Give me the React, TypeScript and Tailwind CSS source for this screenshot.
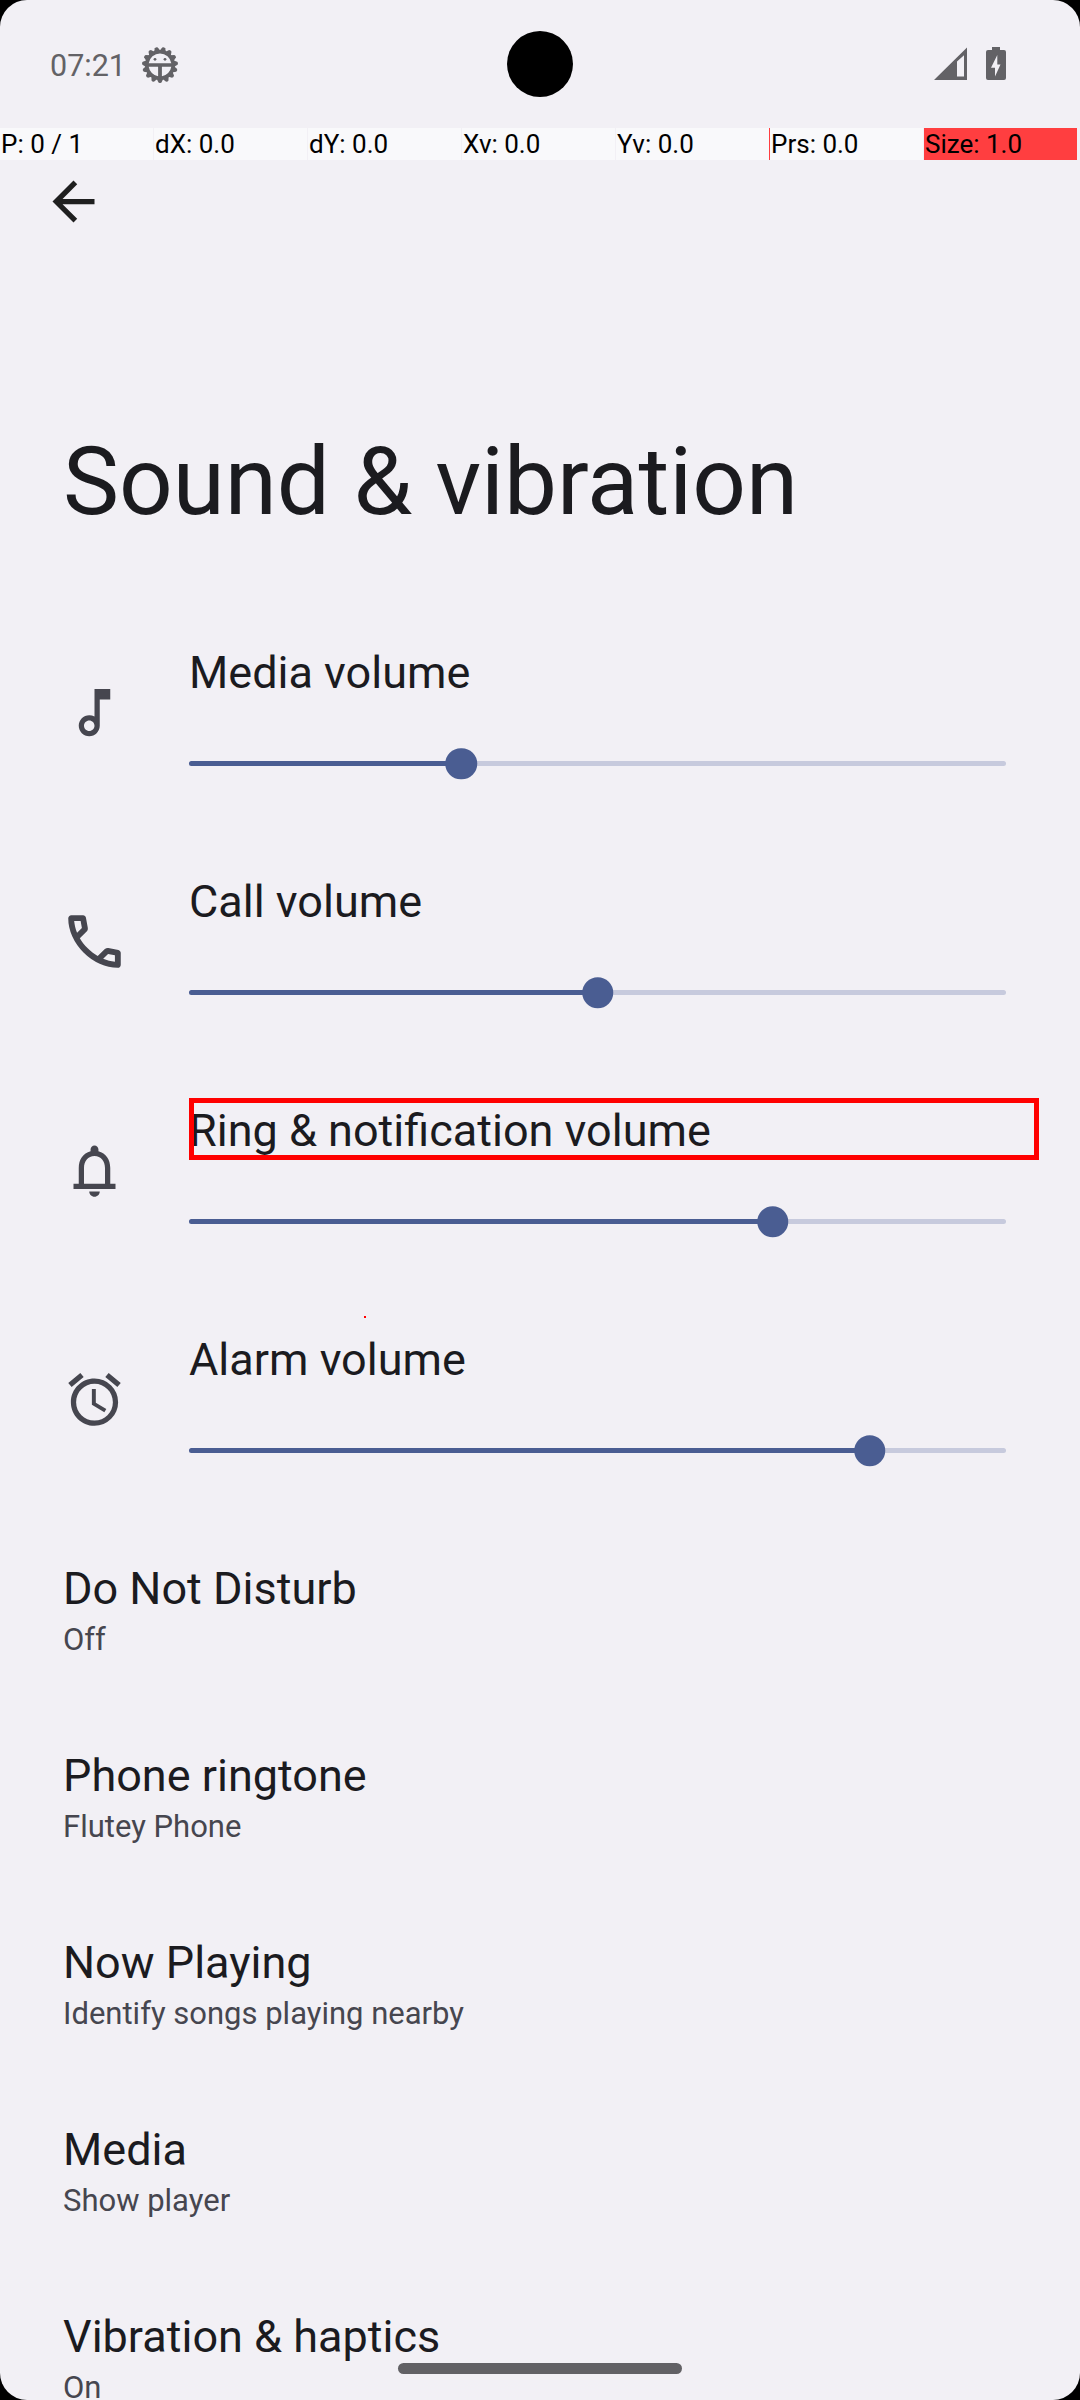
import type { ReactNode } from "react";

const pointerCells = ["P: 0 / 1", "dX: 0.0", "dY: 0.0", "Xv: 0.0", "Yv: 0.0", "Prs: 0.0", "Size: 1.0"];

const volumes = [
  { label: "Media volume", value: 1 / 3, viewBox: "0 0 24 24", icon: "M12 3v10.55A4 4 0 0 0 10 13c-2.21 0-4 1.79-4 4s1.79 4 4 4 4-1.79 4-4V7h4V3h-6zm-2 16c-1.1 0-2-.9-2-2s.9-2 2-2 2 .9 2 2-.9 2-2 2z" },
  { label: "Call volume", value: 1 / 2, viewBox: "1.2 1.2 21.6 21.6", icon: "M19.95 21q-3.125 0-6.175-1.362t-5.55-3.863-3.862-5.55T3 4.05q0-.45.3-.75t.75-.3H8.1q.35 0 .625.238t.325.562l.65 3.5q.05.4-.025.675T9.4 8.45L6.975 10.9q.5.925 1.187 1.787t1.513 1.663q.775.775 1.625 1.438T13.1 17l2.35-2.35q.225-.225.588-.337t.712-.063l3.45.7q.35.1.575.363T21 15.9v4.05q0 .45-.3.75t-.75.3M6.025 9l1.65-1.65L7.25 5H5.025q.125 1.025.35 2.025T6.025 9m8.95 8.95q.975.425 1.988.675T19 18.95v-2.2l-2.35-.475z" },
  { label: "Ring & notification volume", value: 5 / 7, viewBox: "0 0 24 24", icon: "M12 22c1.1 0 2-.9 2-2h-4c0 1.1.9 2 2 2zm6-5v-6c0-3.07-1.63-5.64-4.5-6.32V4c0-.83-.67-1.5-1.5-1.5s-1.5.67-1.5 1.5v.68C7.64 5.36 6 7.92 6 11v6H4v2h16v-2h-2zm-2 0H8v-6c0-2.48 1.51-4.5 4-4.5s4 2.02 4 4.5v6z" },
  { label: "Alarm volume", value: 5 / 6, viewBox: "0 0 24 24", icon: "M22 5.72l-4.6-3.86-1.29 1.53 4.6 3.86L22 5.72zM7.88 3.39L6.6 1.86 2 5.71l1.29 1.53 4.59-3.85zM12.5 8H11v6l4.75 2.85.75-1.23-4-2.37V8zM12 4c-4.97 0-9 4.03-9 9s4.02 9 9 9a9 9 0 0 0 0-18zm0 16c-3.87 0-7-3.13-7-7s3.13-7 7-7 7 3.13 7 7-3.13 7-7 7z" },
];

const entries = [
  ["Do Not Disturb", "Off"],
  ["Phone ringtone", "Flutey Phone"],
  ["Now Playing", "Identify songs playing nearby"],
  ["Media", "Show player"],
  ["Vibration & haptics", "On"],
];

function Icon({ children, className, viewBox = "0 0 24 24" }: { children: ReactNode; className: string; viewBox?: string }) {
  return (
    <svg viewBox={viewBox} fill="currentColor" className={className}>
      {children}
    </svg>
  );
}

function BugGear() {
  const teeth = Array.from({ length: 15 }, (_, i) => 12 + i * 24);
  return (
    <svg viewBox="-18 -18 36 36" className="size-[36px] shrink-0 text-[#636266]">
      <g fill="currentColor">
        {teeth.map((a) => (
          <path key={a} d="M-3.4 -13.5L-1.5 -17.5Q0 -18.6 1.5 -17.5L3.4 -13.5Z" transform={`rotate(${a})`} />
        ))}
        <path fillRule="evenodd" d="M0 -15A15 15 0 1 1 0 15A15 15 0 1 1 0 -15ZM-11.3 -1.7H11.3A11.4 11.4 0 0 0 -11.3 -1.7ZM-11.3 1.7A11.4 11.4 0 0 0 -1.9 11.2V1.7ZM1.9 1.7V11.2A11.4 11.4 0 0 0 11.3 1.7Z" />
        <circle cx="-5" cy="-5.7" r="1.4" />
        <circle cx="5" cy="-5.7" r="1.4" />
      </g>
    </svg>
  );
}

function StatusBar() {
  return (
    <header className="relative flex h-[128px] shrink-0 items-start pl-[50px]">
      <span className="mt-[48px] w-[92px] text-[30.5px] leading-[36px] text-[#636266]">07:21</span>
      <div className="mt-[47px]">
        <BugGear />
      </div>
      <div className="absolute left-[507px] top-[31px] size-[66px] rounded-full bg-black" />
      <div className="ml-auto mr-[74px] mt-[47px] flex gap-[19px] text-[#636266]">
        <svg viewBox="0 0 33 33" className="size-[33px]" fill="currentColor">
          <path fillRule="evenodd" d="M33 0.5V33H0ZM30 8.2L23 14.5V29.5H30Z" />
        </svg>
        <svg viewBox="0 0 20 33" className="h-[33px] w-[20px]" fill="currentColor">
          <path fillRule="evenodd" d="M6 0H14V3H18Q20 3 20 5V31Q20 33 18 33H2Q0 33 0 31V5Q0 3 2 3H6ZM11.3 8L5 20.8H9V29.5L14.5 17.5H11.3Z" />
        </svg>
      </div>
    </header>
  );
}

function PointerBar() {
  return (
    <div className="flex h-8 shrink-0 gap-px text-[26px] leading-[32px] text-black">
      {pointerCells.map((text, i) => (
        <div
          key={text}
          className={`h-8 w-[153px] shrink-0 whitespace-pre pl-[1px] ${i === 6 ? "bg-[#ff3e40]" : "bg-[#f9f9fb]"} ${i === 5 ? "shadow-[-1px_0_0_#ff3e40]" : ""}`}
        >
          {text}
        </div>
      ))}
    </div>
  );
}

function Slider({ value }: { value: number }) {
  return (
    <div className="relative h-[5px] w-[817px] rounded-full bg-[#c7cadd]">
      <div className="h-full rounded-full bg-[#4a5d92]" style={{ width: `${value * 100}%` }} />
      <div
        className="absolute top-1/2 size-[31.5px] -translate-x-1/2 -translate-y-1/2 rounded-full bg-[#4a5d92]"
        style={{ left: `${value * 100}%` }}
      />
    </div>
  );
}

export default function App() {
  return (
    <div className="h-[2400px] w-[1080px] overflow-hidden bg-black font-['Roboto',sans-serif]">
      <div className="relative flex h-full flex-col overflow-hidden rounded-[27px] bg-[#f2f0f5] text-[#1b1b1f]">
        <StatusBar />
        <PointerBar />
        <Icon className="ml-[42px] mt-[10px] size-[63px] shrink-0 text-[#1f1f1f]">
          <path d="M20 11H7.83l5.59-5.59L12 4l-8 8 8 8 1.41-1.41L7.83 13H20v-2z" />
        </Icon>
        <h1 className="ml-[63px] mt-[193px] h-[112px] shrink-0 whitespace-nowrap text-[94.3px] leading-[112px]">
          Sound &amp; vibration
        </h1>
        <section className="mt-[67px] flex shrink-0 flex-col">
          {volumes.map((v, i) => (
            <div key={v.label} className="flex h-[229px] pl-[63px]">
              <Icon viewBox={v.viewBox} className="mt-[76px] size-[63px] shrink-0 text-[#46464f]">
                <path d={v.icon} />
              </Icon>
              <div className="ml-[63px] flex flex-col">
                <div className="relative mt-[35px] h-[62px] w-[850px] text-[45px] leading-[65px]">
                  {v.label}
                  {i === 2 && <div className="absolute inset-0 border-[5px] border-[#ff0000]" />}
                </div>
                <div className="mt-[59px]">
                  <Slider value={v.value} />
                </div>
              </div>
            </div>
          ))}
        </section>
        <section className="flex shrink-0 flex-col pl-[63px] pt-[42px]">
          {entries.map(([title, detail]) => (
            <div key={title} className="h-[187px] whitespace-nowrap">
              <div className="text-[45px] leading-[52px]">{title}</div>
              <div className="mt-[10px] text-[31px] leading-[30px] text-[#46464f]">{detail}</div>
            </div>
          ))}
        </section>
        <div className="absolute left-[364px] top-[1316px] size-[2px] bg-[#ff0000]" />
        <div className="absolute left-[398px] top-[2363px] h-[11px] w-[284px] rounded-full bg-[#626165]" />
      </div>
    </div>
  );
}
